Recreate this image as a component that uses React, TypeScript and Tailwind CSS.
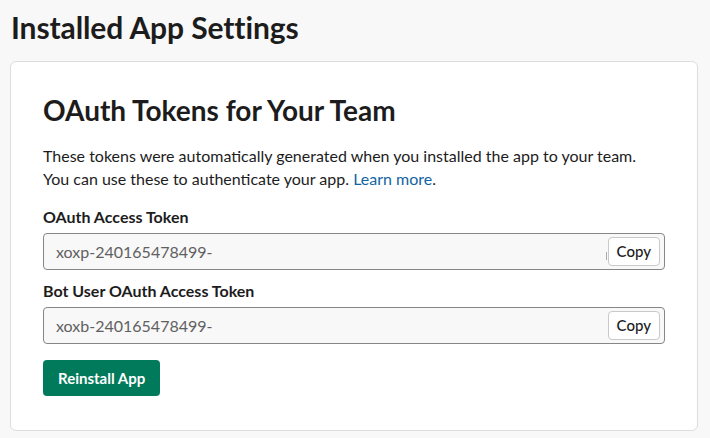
import React from "react";

function TokenField({ label, value, cursor }: { label: string; value: string; cursor?: boolean }) {
  return (
    <div className="flex flex-col">
      <div className="text-[16px] font-bold leading-[22px] text-[#1d1c1d] mb-[5px]">{label}</div>
      <div className="relative flex items-center h-[37px] w-[622px] rounded-[4px] border border-[#868686] bg-[#f8f8f8] pl-[12px] pr-[4px]">
        <span className="flex-1 text-[16px] text-[#616061]">{value}</span>
        {cursor && <span className="w-px h-[8px] bg-[#aaa] mr-[1px] mt-[8px]" />}
        <button className="h-[29px] px-[8px] rounded-[4px] border border-[#c9c9c9] bg-white text-[15px] text-[#1d1c1d] font-medium">
          Copy
        </button>
      </div>
    </div>
  );
}

export default function App() {
  return (
    <div
      className="min-h-[438px] w-[710px] bg-[#f8f8f8] px-[10px] pt-[8px] pb-[10px]"
      style={{ fontFamily: "Lato, 'Noto Sans', sans-serif" }}
    >
      <h1 className="text-[30px] font-bold leading-[38px] text-[#1d1c1d] pl-[1px] tracking-[-0.1px]">Installed App Settings</h1>
      <div className="mt-[15px] w-[688px] rounded-[6px] border border-[#dddddd] bg-white pl-[32px] pt-[30px] pb-[34px]">
        <h2 className="text-[28px] font-bold leading-[36px] text-[#1d1c1d]">OAuth Tokens for Your Team</h2>
        <p className="mt-[16px] text-[16px] leading-[23px] text-[#1d1c1d]">
          These tokens were automatically generated when you installed the app to your team.
          <br />
          You can use these to authenticate your app. <a className="text-[#1264a3]">Learn more</a>.
        </p>
        <div className="mt-[16px] flex flex-col gap-[10px]">
          <TokenField label="OAuth Access Token" value="xoxp-240165478499-" cursor />
          <TokenField label="Bot User OAuth Access Token" value="xoxb-240165478499-" />
        </div>
        <button className="mt-[16px] h-[36px] px-[15px] rounded-[4px] bg-[#007a5a] text-white text-[15px] font-bold">
          Reinstall App
        </button>
      </div>
    </div>
  );
}
